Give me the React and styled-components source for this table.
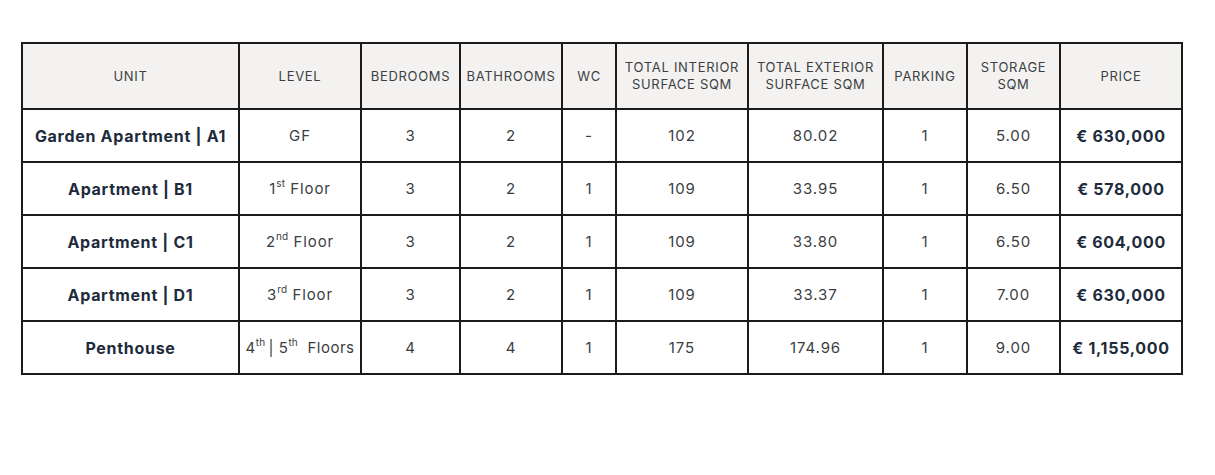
import React from "react";
import styled, { createGlobalStyle } from "styled-components";

const Global = createGlobalStyle`
  html, body { margin: 0; padding: 0; background: #ffffff; }
  body { font-family: Inter, "Open Sans", Arial, sans-serif; }
`;

const Page = styled.div`
  padding: 42px 0 0 21px;
`;

const Table = styled.table`
  border-collapse: collapse;
  table-layout: fixed;
  width: 1160px;
  border: 2px solid #1b1b1b;
`;

const HeadCell = styled.th`
  background: #f3f2f0;
  border: 2px solid #1b1b1b;
  height: 64px;
  padding: 0 2px;
  font-weight: 400;
  font-size: 13px;
  line-height: 17px;
  letter-spacing: 0.7px;
  color: #3c3f44;
  text-align: center;
  vertical-align: middle;
`;

const Cell = styled.td`
  border: 2px solid #1b1b1b;
  height: 51px;
  padding: 0 2px;
  text-align: center;
  vertical-align: middle;
  font-size: ${(p) => (p.$bold ? "16px" : "15px")};
  font-weight: ${(p) => (p.$bold ? 700 : 400)};
  color: ${(p) => (p.$bold ? "#1e2b3c" : "#3a3d42")};
  letter-spacing: ${(p) => (p.$bold ? "0.7px" : p.$tight ? "0.5px" : "0.9px")};
  white-space: nowrap;
`;

const Sup = styled.sup`
  font-size: 10px;
  line-height: 0;
  letter-spacing: 0.2px;
  position: relative;
  top: -1px;
`;

const cols = [217, 122, 99, 102, 54, 132, 135, 84, 93, 122];

const headers = [
  "UNIT",
  "LEVEL",
  "BEDROOMS",
  "BATHROOMS",
  "WC",
  ["TOTAL INTERIOR", "SURFACE SQM"],
  ["TOTAL EXTERIOR", "SURFACE SQM"],
  "PARKING",
  ["STORAGE", "SQM"],
  "PRICE",
];

const rows = [
  { unit: "Garden Apartment | A1", level: <>GF</>, bed: 3, bath: 2, wc: "-", int: "102", ext: "80.02", park: 1, sto: "5.00", price: "€ 630,000" },
  { unit: "Apartment | B1", level: <>1<Sup>st</Sup> Floor</>, bed: 3, bath: 2, wc: "1", int: "109", ext: "33.95", park: 1, sto: "6.50", price: "€ 578,000" },
  { unit: "Apartment | C1", level: <>2<Sup>nd</Sup> Floor</>, bed: 3, bath: 2, wc: "1", int: "109", ext: "33.80", park: 1, sto: "6.50", price: "€ 604,000" },
  { unit: "Apartment | D1", level: <>3<Sup>rd</Sup> Floor</>, bed: 3, bath: 2, wc: "1", int: "109", ext: "33.37", park: 1, sto: "7.00", price: "€ 630,000" },
  { unit: "Penthouse", level: <>4<Sup>th</Sup>{"\u2009"}| 5<Sup>th</Sup>&nbsp; Floors</>, tight: true, bed: 4, bath: 4, wc: "1", int: "175", ext: "174.96", park: 1, sto: "9.00", price: "€ 1,155,000" },
];

export default function App() {
  return (
    <Page>
      <Global />
      <Table>
        <colgroup>
          {cols.map((w, i) => (
            <col key={i} style={{ width: w }} />
          ))}
        </colgroup>
        <thead>
          <tr>
            {headers.map((h, i) => (
              <HeadCell key={i}>
                {Array.isArray(h) ? (
                  <>
                    {h[0]}
                    <br />
                    {h[1]}
                  </>
                ) : (
                  h
                )}
              </HeadCell>
            ))}
          </tr>
        </thead>
        <tbody>
          {rows.map((r, i) => (
            <tr key={i}>
              <Cell $bold>{r.unit}</Cell>
              <Cell $tight={r.tight}>{r.level}</Cell>
              <Cell>{r.bed}</Cell>
              <Cell>{r.bath}</Cell>
              <Cell>{r.wc}</Cell>
              <Cell>{r.int}</Cell>
              <Cell>{r.ext}</Cell>
              <Cell>{r.park}</Cell>
              <Cell>{r.sto}</Cell>
              <Cell $bold>{r.price}</Cell>
            </tr>
          ))}
        </tbody>
      </Table>
    </Page>
  );
}
